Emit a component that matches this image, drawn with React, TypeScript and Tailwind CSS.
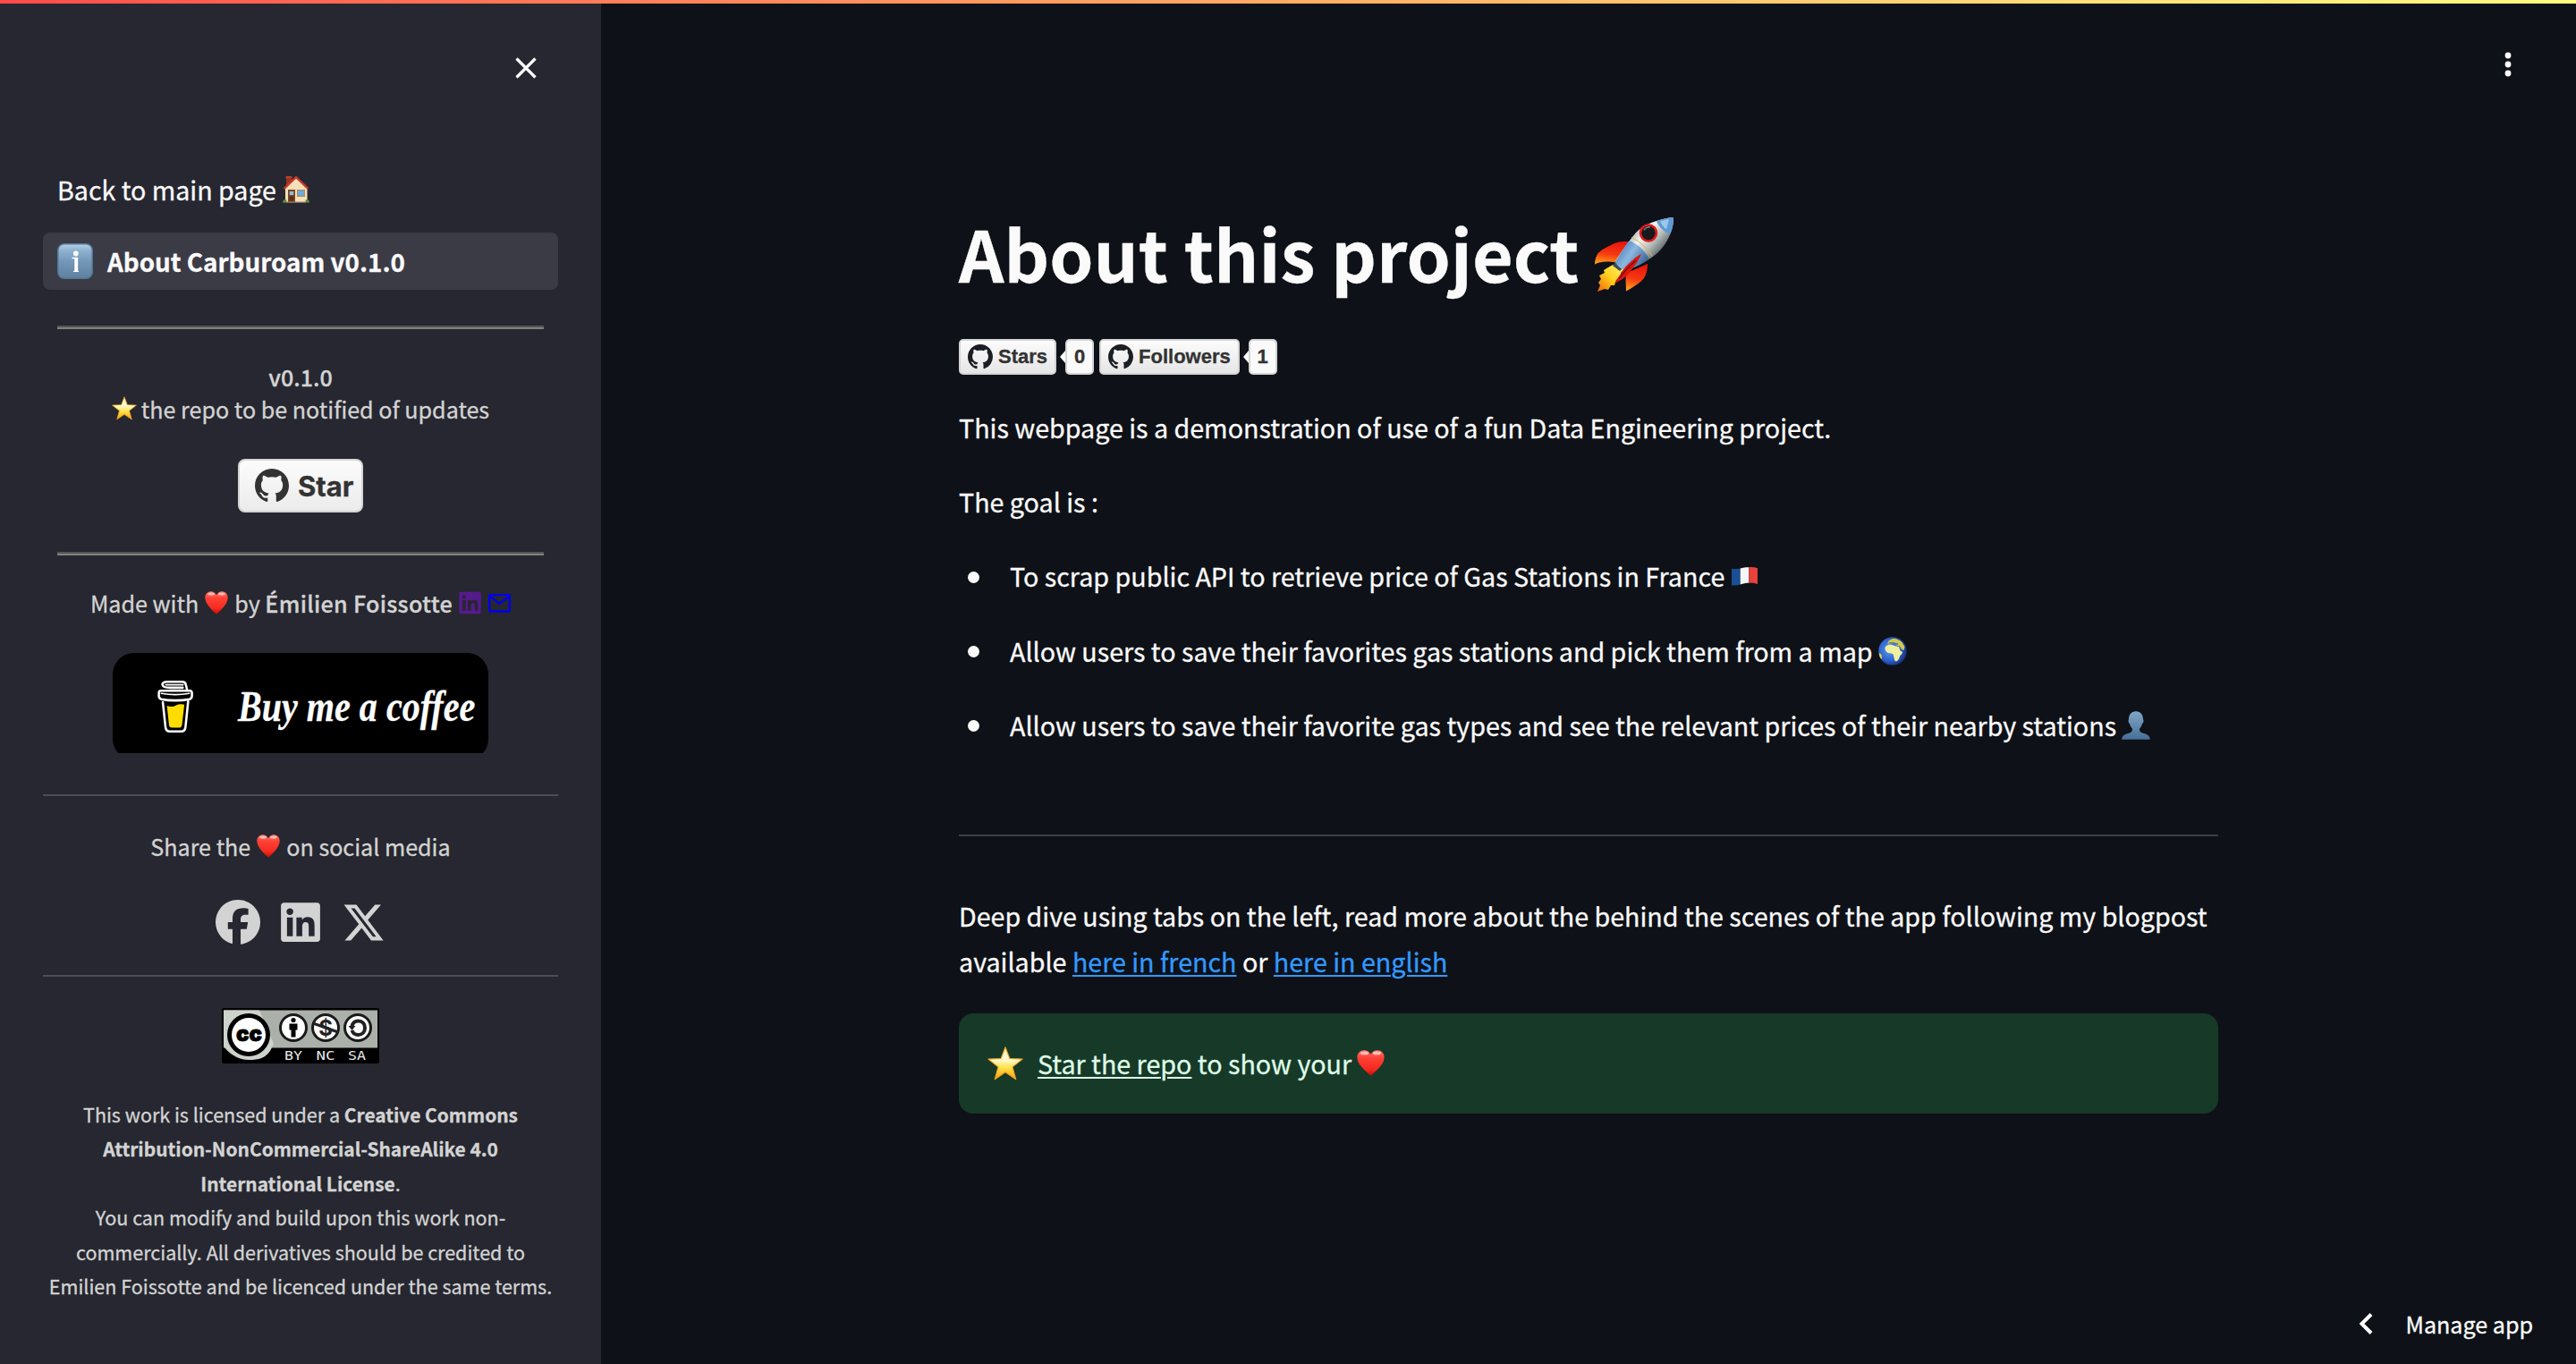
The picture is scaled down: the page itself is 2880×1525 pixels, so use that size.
import type { ReactNode } from 'react';
import { FaFacebook, FaLinkedin, FaXTwitter } from 'react-icons/fa6';

type IconProps = { className?: string };

function GithubMark({ className = '' }: IconProps) {
  return (
    <svg viewBox="0 0 16 16" fill="currentColor" className={className} aria-label="GitHub">
      <path d="M8 0C3.58 0 0 3.58 0 8c0 3.54 2.29 6.53 5.47 7.59.4.07.55-.17.55-.38 0-.19-.01-.82-.01-1.49-2.01.37-2.53-.49-2.69-.94-.09-.23-.48-.94-.82-1.13-.28-.15-.68-.52-.01-.53.63-.01 1.08.58 1.23.82.72 1.21 1.87.87 2.33.66.07-.52.28-.87.51-1.07-1.78-.2-3.64-.89-3.64-3.95 0-.87.31-1.59.82-2.15-.08-.2-.36-1.02.08-2.12 0 0 .67-.21 2.2.82.64-.18 1.32-.27 2-.27.68 0 1.36.09 2 .27 1.53-1.04 2.2-.82 2.2-.82.44 1.1.16 1.92.08 2.12.51.56.82 1.27.82 2.15 0 3.07-1.87 3.75-3.65 3.95.29.25.54.73.54 1.48 0 1.07-.01 1.93-.01 2.2 0 .21.15.46.55.38A8.013 8.013 0 0016 8c0-4.42-3.58-8-8-8z" />
    </svg>
  );
}

function Heart({ className = '' }: IconProps) {
  return (
    <svg viewBox="0 0 26 26" preserveAspectRatio="none" className={`inline-block ${className}`} aria-label="heart">
      <defs>
        <linearGradient id="heartFill" x1="0" y1="0" x2="0" y2="1">
          <stop offset="0" stopColor="#ff7a70" />
          <stop offset="0.3" stopColor="#ff4135" />
          <stop offset="0.75" stopColor="#f5291f" />
          <stop offset="1" stopColor="#c40d08" />
        </linearGradient>
      </defs>
      <path
        d="M13 4.2C11.5 1.4 9.2.2 6.900.2 3 .2.3 3.200.3 7.300c0 3.900 2.200 7.400 5 10.600 2.200 2.600 5.200 5.400 7.700 7.900 2.500-2.500 5.500-5.300 7.700-7.900 2.800-3.200 5-6.700 5-10.600 0-4.100-2.700-7.100-6.600-7.100-2.300 0-4.600 1.200-6.100 4z"
        fill="url(#heartFill)"
      />
      <ellipse cx="7.200" cy="3.100" rx="3.800" ry="1.700" fill="#ffd9d4" opacity="0.75" />
      <ellipse cx="18.800" cy="3.100" rx="3.800" ry="1.700" fill="#ffd9d4" opacity="0.75" />
    </svg>
  );
}

function Star({ className = '' }: IconProps) {
  return (
    <svg viewBox="0 0 40 38" className={`inline-block ${className}`} aria-label="star">
      <defs>
        <linearGradient id="starFill" x1="0" y1="0" x2="0" y2="1">
          <stop offset="0" stopColor="#fff3b8" />
          <stop offset="0.4" stopColor="#fff9cf" />
          <stop offset="0.62" stopColor="#ffe44f" />
          <stop offset="1" stopColor="#f7a30c" />
        </linearGradient>
      </defs>
      <path
        d="M20 .8l4.900 12.700 14.300.6-11.200 8.800 3.800 13.800-11.800-7.900-11.800 7.900 3.800-13.800L.8 14.100l14.300-.6z"
        fill="url(#starFill)"
        stroke="#e8a020"
        strokeWidth="1.100"
        strokeLinejoin="round"
      />
    </svg>
  );
}

function House({ className = '' }: IconProps) {
  return (
    <svg viewBox="0 0 30 30" className={`inline-block ${className}`} aria-label="home">
      <rect x="4" y="0.500" width="6" height="10" fill="#9a3324" />
      <rect x="3.500" y="0" width="7" height="2.200" fill="#b5412f" />
      <path d="M3 29V13L15 2.500 27.500 13V29z" fill="#f6dfb6" />
      <path d="M1.500 14.200L15 1l13.500 13.200" fill="none" stroke="#c8392b" strokeWidth="2.400" />
      <rect x="6" y="15" width="8" height="14" fill="#7d4424" />
      <rect x="7.800" y="17" width="4.400" height="4" fill="#7fc1f0" />
      <rect x="7.500" y="22.500" width="5" height="5" fill="#5e2e16" />
      <rect x="16" y="15" width="9" height="8" fill="#a98a68" />
      <rect x="17.200" y="16.200" width="6.600" height="5.600" fill="#69aee6" />
      <path d="M0 29.500c0-3 3-4.500 4.500-2.500v2.500zM25.500 29.500V27c1.500-2 4.500-.5 4.500 2.500z" fill="#5f8f3a" />
      <rect x="4" y="28.500" width="22" height="1.200" fill="#8f8373" />
    </svg>
  );
}

function Info({ className = '' }: IconProps) {
  return (
    <svg viewBox="0 0 40 40" className={className} aria-label="information">
      <defs>
        <linearGradient id="infoFill" x1="0" y1="0" x2="0" y2="1">
          <stop offset="0" stopColor="#b9d2e6" />
          <stop offset="0.18" stopColor="#8fb2d0" />
          <stop offset="0.5" stopColor="#7498b9" />
          <stop offset="1" stopColor="#5f809f" />
        </linearGradient>
      </defs>
      <rect x="0.800" y="0.800" width="38.400" height="38.400" rx="7" fill="url(#infoFill)" stroke="#537795" strokeWidth="1.400" />
      <circle cx="20.800" cy="11.500" r="2.900" fill="#fff" />
      <path d="M16.500 16.500h6v14.200M18 31.300h6" fill="none" stroke="#fff" strokeWidth="1.300" />
      <path d="M19.300 17h3.400v14.500h-3.400z" fill="#fff" />
    </svg>
  );
}

function Rocket({ className = '' }: IconProps) {
  return (
    <svg viewBox="0 0 88 84" className={className} aria-label="rocket">
      <defs>
        <linearGradient id="hull" x1="0.200" y1="0.250" x2="0.750" y2="0.700">
          <stop offset="0" stopColor="#8d9698" />
          <stop offset="0.400" stopColor="#f3f5f2" />
          <stop offset="0.700" stopColor="#b4bbb9" />
          <stop offset="1" stopColor="#5d666b" />
        </linearGradient>
        <linearGradient id="blueHull" x1="0" y1="0.200" x2="1" y2="0.800">
          <stop offset="0" stopColor="#3f78b3" />
          <stop offset="0.450" stopColor="#8db8e2" />
          <stop offset="1" stopColor="#28507f" />
        </linearGradient>
        <linearGradient id="fin" x1="0.500" y1="0" x2="0.300" y2="1">
          <stop offset="0" stopColor="#e8160c" />
          <stop offset="0.550" stopColor="#f63a12" />
          <stop offset="1" stopColor="#ffa21a" />
        </linearGradient>
        <linearGradient id="flame" x1="1" y1="0" x2="0" y2="1">
          <stop offset="0" stopColor="#fff27a" />
          <stop offset="0.500" stopColor="#ffd21c" />
          <stop offset="1" stopColor="#f2660a" />
        </linearGradient>
      </defs>
      <path
        d="M20 54L10 60l1 3-6 3 2 4-3 4 2 3-3 7 8-3 4 1 3-5 4 0 2-6 5-3 0-5 5-5z"
        fill="url(#flame)"
      />
      <path d="M38 28c-8 0-12 0-18 3C12 35 6 38 3 42 1 46 0 49 0 53.500c7-3.500 14-3.500 24-2z" fill="url(#fin)" />
      <path d="M59 53c0 6-1 11-4 16-5 6-12 10-20 14.500 0-7-1-13 0-20z" fill="url(#fin)" />
      <path d="M23 50l9 7-4 4-8-6z" fill="#3c4a55" />
      <path d="M86 1C72 3 56 8 46 18 36 30 28 42 23 50c3 6 7 9 13 10 12-4 26-12 35-20C82 29 88 14 88 3c0-1.500-.6-2-2-2z" fill="url(#hull)" />
      <path d="M38.500 27C32 36 26.500 45 23 51c3 5.500 7 8.500 13 9 10-3.500 18.500-8 25-12.500C55 37 48 31 38.500 27z" fill="url(#blueHull)" />
      <path d="M86 1c-6 .8-12 2.300-17 4.400C73 14 79 18 84 20c3-6 4-12 4-17 0-1.500-.6-2-2-2z" fill="#5f9bd3" />
      <path d="M83 3c-4 .7-7 1.500-10 2.600 2 4 4 6.500 7 8.900" fill="#b9daf4" opacity="0.700" />
      <path d="M41 23.500c10 4.500 17 11.500 23.500 21" fill="none" stroke="#d8b44a" strokeWidth="1" />
      <circle cx="60" cy="18.500" r="9" fill="#17191c" stroke="#e1191b" strokeWidth="2.600" />
      <path d="M55 15.500c1.500-3 4-4 7-3.500" stroke="#73797e" strokeWidth="1.500" fill="none" />
      <path d="M52 42c-3 1-16 11-21 19-4 6-7 10-9 14 8-4 14-8 18-14 5-6 9-12 12-19z" fill="#dc160e" />
      <path d="M46 49c-7 6-15 15-19 21" stroke="#6b0b08" strokeWidth="1.200" fill="none" />
    </svg>
  );
}

function Flag({ className = '' }: IconProps) {
  return (
    <svg viewBox="0 0 29 21" className={`inline-block ${className}`} aria-label="France">
      <path d="M0 1.800c3.500.8 6.500.4 9.700-.3v18C6.500 20.400 3.500 20.900 0 20.400z" fill="#1a4f96" />
      <path d="M9.700 1.500C13 .6 16 .1 19.300.2v17.600c-3.300 0-6.300.6-9.600 1.700z" fill="#f6f6f6" />
      <path d="M19.300.2c3.400-.3 6.700.1 9.700 1v17.900c-3-1.100-6.300-1.500-9.700-1.300z" fill="#e8423c" />
    </svg>
  );
}

function Globe({ className = '' }: IconProps) {
  return (
    <svg viewBox="0 0 32 32" className={`inline-block ${className}`} aria-label="globe">
      <defs>
        <radialGradient id="sea" cx="0.400" cy="0.450" r="0.620">
          <stop offset="0" stopColor="#5b9cf5" />
          <stop offset="0.650" stopColor="#2a5fc9" />
          <stop offset="1" stopColor="#152a6b" />
        </radialGradient>
      </defs>
      <circle cx="16" cy="16" r="15.800" fill="url(#sea)" />
      <path d="M8 11c2-2 4-2.500 6.500-2.200l5 1.700 3.500.5 1.500 4.500 2.500 1.500c0 2-2 3-3 4.500-.5 2-1 4-3 5.500-1.500 1-2.500 0-3-1.500-.6-2-.6-4-1.500-6-1.500-1.500-3.500-1-5.500-1.500C8.500 16.500 6.500 14 8 11z" fill="#f0f0a0" />
      <path d="M10 7.500L12 4l4-2c4-.5 8 1.500 10.500 4l3 5-1 4-2.500-1-2-3.500-4-1-2.500-2-3 .5z" fill="#cfc94f" />
      <path d="M1 18l2.500 2 .5 4-1 .5C1.500 22.500.8 20.500 1 18z" fill="#e8d44a" />
      <path d="M12 6.500c2 1 5-.5 7 1.300l3 .2" stroke="#2b62c4" strokeWidth="1.300" fill="none" />
    </svg>
  );
}

function Person({ className = '' }: IconProps) {
  return (
    <svg viewBox="0 0 32 32" className={`inline-block ${className}`} aria-label="user">
      <defs>
        <linearGradient id="bust" x1="0" y1="0" x2="0" y2="1">
          <stop offset="0" stopColor="#7fa6c6" />
          <stop offset="1" stopColor="#476f97" />
        </linearGradient>
      </defs>
      <path
        d="M16 .2c-5 0-8 3.600-8 8.600 0 .8-.6 1.200-.5 2.400.1 1.600.8 2.400 1.500 2.800.6 3 1.800 4.600 3 5.800 0 2-.4 3.400-2 4.200C6.500 25.300.4 25.800.2 31.800h31.600c-.2-6-6.300-6.500-9.800-7.800-1.600-.8-2-2.200-2-4.200 1.200-1.200 2.400-2.800 3-5.800.7-.4 1.400-1.200 1.500-2.800.1-1.200-.5-1.600-.5-2.400 0-5-3-8.600-8-8.600z"
        fill="url(#bust)"
      />
    </svg>
  );
}

function CoffeeCup({ className = '' }: IconProps) {
  return (
    <svg viewBox="0 0 40 60" className={className} fill="none" stroke="#fff" strokeWidth="2.600" strokeLinejoin="round" strokeLinecap="round">
      <path d="M10.500 28.500c4 1.600 7 1.200 10.500-.6 3-1.500 6-1.700 9.300-.7L27.600 50c-.2 2.200-1.400 3.400-3.400 3.400h-8c-2 0-3.200-1-3.400-3.200z" fill="#ffdd00" stroke="none" />
      <path d="M5.800 24.500l3 28c.3 3.400 2 5.300 5 5.300h12.800c3 0 4.700-1.900 5-5.300l3-29" />
      <path d="M3.500 11.500h33c1.500 0 2.400 1 2.400 2.600v3.200c0 2-.9 3.200-2.800 3.700-9 2-23 2-32 0-1.900-.5-2.800-1.700-2.800-3.700V14c0-1.600.7-2.500 2.200-2.500z" />
      <path d="M4 14.500c9 1.600 23 1.600 32 0" strokeWidth="1.600" />
      <path d="M33.500 11L32 4.500C31.500 2 30 1.300 28 1.300H11C7 1.300 5 2.800 5.400 4.700 5.800 6.900 9 8 14 8h14.500" />
      <path d="M9 4.700h20" strokeWidth="1.600" />
    </svg>
  );
}

function Mail({ className = '' }: IconProps) {
  return (
    <svg viewBox="0 0 25 21" className={`inline-block ${className}`} fill="none" stroke="#0000ee" strokeWidth="2.300">
      <rect x="1.200" y="1.200" width="22.600" height="18.300" rx="1" />
      <path d="M1.500 2.500l11 8.300 11-8.300" />
    </svg>
  );
}

function CcBadge({ className = '' }: IconProps) {
  return (
    <svg viewBox="0 0 176 62" className={className} fontFamily="Inter, sans-serif" aria-label="CC BY-NC-SA">
      <rect width="176" height="62" rx="2" fill="#000" />
      <rect x="2" y="2.500" width="172" height="42" fill="#abb1aa" />
      <path d="M2 2.500h40L58 40l-4 8c-6 8-12 10-24 10S6 50 2 42z" fill="#ced2cd" />
      <circle cx="30" cy="30" r="24" fill="#000" />
      <circle cx="30" cy="30" r="19" fill="#fff" />
      <text x="30.500" y="36.500" fontSize="24" fontWeight="900" textAnchor="middle" textLength="29" lengthAdjust="spacingAndGlyphs" stroke="#000" strokeWidth="0.800">cc</text>
      {[80, 116, 152].map((cx) => (
        <circle key={cx} cx={cx} cy="22" r="14.500" fill="#fff" stroke="#1a1a1a" strokeWidth="3" />
      ))}
      <circle cx="80" cy="13.500" r="2.600" fill="#000" />
      <path d="M75.500 17.500h9v7h-2v8h-5v-8h-2z" fill="#000" />
      <text x="116" y="31" fontSize="24" fontWeight="700" textAnchor="middle" fill="#222">$</text>
      <path d="M102 17l28 10" stroke="#222" strokeWidth="3" />
      <path d="M145.500 20.500c.8-4 3.500-6 7-6 4.500 0 7.500 3.300 7.500 7.700s-3 7.800-7.500 7.800c-3.500 0-6-1.800-7-5" fill="none" stroke="#222" strokeWidth="4" />
      <path d="M141.500 20h8l-4 5z" fill="#222" />
      <g fill="#e8e8e8" fontSize="14" fontWeight="500" textAnchor="middle" fontFamily="'DejaVu Sans Mono', monospace">
        <text x="80" y="58" textLength="20" lengthAdjust="spacingAndGlyphs">BY</text>
        <text x="116" y="58" textLength="21" lengthAdjust="spacingAndGlyphs">NC</text>
        <text x="151" y="58" textLength="20" lengthAdjust="spacingAndGlyphs">SA</text>
      </g>
    </svg>
  );
}

function GithubBadge({ label, count }: { label: string; count: string }) {
  return (
    <div className="flex h-10 items-stretch font-['Liberation_Sans',sans-serif] text-[22px] font-bold text-[#333]">
      <div className="flex items-center gap-1.5 rounded-[5px] border-2 border-[#d4d4d4] bg-linear-to-b from-[#fcfcfc] to-[#e6e6e6] pr-2 pl-2">
        <GithubMark className="size-7 text-[#1b1f23]" />
        <span className="leading-none">{label}</span>
      </div>
      <svg viewBox="0 0 6 14" className="ml-1 h-3.5 w-1.5 self-center">
        <path d="M6 0L0 7l6 7z" fill="#fafafa" />
      </svg>
      <div className="flex w-8 items-center justify-center rounded-[5px] border-2 border-[#d4d4d4] bg-[#fafafa] leading-none">
        {count}
      </div>
    </div>
  );
}

function Bullet({ children }: { children: ReactNode }) {
  return (
    <li className="flex items-center">
      <span className="mt-0.5 mr-[34px] ml-2.5 size-[13px] rounded-full bg-[#fafafa]" />
      <span>{children}</span>
    </li>
  );
}

function Sidebar() {
  return (
    <aside className="flex w-[672px] shrink-0 flex-col bg-[#262730] px-12 text-[25.1px] leading-9 text-[#d3d3d3]">
      <div className="flex h-[180px] items-start justify-end pt-16 pr-6">
        <svg viewBox="0 0 24 24" className="size-6" stroke="#fafafa" strokeWidth="3.200">
          <path d="M1.500 1.500l21 21M22.500 1.500l-21 21" />
        </svg>
      </div>

      <nav className="flex flex-col gap-4 text-[#fafafa]">
        <a className="flex h-16 items-center px-4 text-[28.6px]">
          Back to main page
          <House className="ml-[7px] size-[30px]" />
        </a>
        <a className="flex h-16 items-center gap-4 rounded-lg bg-[#3b3b46] px-4 text-[27.8px] font-bold">
          <Info className="size-10" />
          About Carburoam v0.1.0
        </a>
      </nav>

      <hr className="mx-4 mt-10 h-1 border-t-2 border-b-2 border-t-[#555] border-b-[#808080]" />

      <div className="mt-[35px] text-center">
        <p className="font-medium">v0.1.0</p>
        <p>
          <Star className="mr-[5px] h-[27px] w-7 align-[-2px]" />
          the repo to be notified of updates
        </p>
      </div>

      <div className="mt-[38px] flex h-[60px] w-[140px] items-center gap-2.5 self-center rounded-lg border-2 border-[#d4d4d4] bg-linear-to-b from-[#fcfcfc] to-[#ebebeb] pl-[17px] font-['Inter',sans-serif] text-[31px] font-bold text-[#333]">
        <GithubMark className="size-[38px] shrink-0" />
        <span className="leading-none">Star</span>
      </div>

      <hr className="mx-4 mt-11 h-1 border-t-2 border-b-2 border-t-[#555] border-b-[#808080]" />

      <p className="mt-[35px] flex h-9 items-center justify-center whitespace-pre">
        Made with
        <Heart className="mx-[7px] h-[26px] w-[26px]" />
        by <span className="font-medium tracking-[0.3px]">Émilien Foissotte</span>
        <FaLinkedin className="mr-2 ml-[7px] h-7 w-[25px] text-[#551a8b]" />
        <Mail className="h-[21px] w-[25px]" />
      </p>

      <div className="mt-[38px] h-28 w-[420px] self-center overflow-hidden">
        <div className="flex h-[120px] items-center rounded-3xl bg-black pl-[50px] text-white">
          <CoffeeCup className="h-[59px] w-10 shrink-0" />
          <span className="ml-[50px] origin-left scale-x-[0.835] font-['Liberation_Serif',serif] text-[48px] leading-none font-bold whitespace-nowrap italic">
            Buy me a coffee
          </span>
        </div>
      </div>

      <hr className="mt-[46px] h-0.5 border-0 bg-[#4c4d56]" />

      <p className="mt-[38px] flex h-9 items-center justify-center">
        Share the
        <Heart className="mx-[7px] size-[26px]" />
        on social media
      </p>

      <div className="mt-[42px] flex h-[50px] items-center justify-center">
        <FaFacebook className="size-[50px]" />
        <FaLinkedin className="ml-[23px] h-[50px] w-11" />
        <FaXTwitter className="ml-6 size-[49px]" />
      </div>

      <hr className="mt-[34px] h-0.5 border-0 bg-[#4c4d56]" />

      <CcBadge className="mt-[35px] h-[62px] w-44 self-center" />

      <p className="-mx-2 mt-[38px] text-center text-[21.5px] leading-[38.4px]">
        This work is licensed under a <b className="text-[20.9px]">Creative Commons</b>
        <br />
        <b className="text-[20.9px]">Attribution-NonCommercial-ShareAlike 4.0</b>
        <br />
        <b className="text-[20.9px]">International License</b>.<br />
        You can modify and build upon this work non-
        <br />
        commercially. All derivatives should be credited to
        <br />
        Emilien Foissotte and be licenced under the same terms.
      </p>
    </aside>
  );
}

export default function App() {
  return (
    <div className="relative flex h-[1525px] w-[2880px] overflow-hidden bg-[#0e1117] font-['Noto_Sans_CJK_SC',sans-serif] text-[#fafafa] [-webkit-text-stroke:0.3px]">
      <div className="absolute inset-x-0 top-0 h-1 bg-linear-to-r from-[#ff4b4b] to-[#fffd80]" />
      <Sidebar />

      <main className="ml-[400px] flex w-[1408px] flex-col text-[28.67px] leading-[51.2px]">
        <h1 className="mt-[229px] flex h-[106px] items-center text-[78.8px] leading-[106px] font-bold">
          About this project
          <Rocket className="ml-[18px] h-[84px] w-[88px] translate-y-0.5" />
        </h1>

        <div className="mt-11 flex gap-1.5">
          <GithubBadge label="Stars" count="0" />
          <GithubBadge label="Followers" count="1" />
        </div>

        <div className="mt-[33px] flex flex-col gap-8">
          <p>This webpage is a demonstration of use of a fun Data Engineering project.</p>
          <p>The goal is :</p>
          <ul className="flex flex-col gap-8">
            <Bullet>
              To scrap public API to retrieve price of Gas Stations in France
              <Flag className="ml-2 h-[21px] w-[29px] align-[1px]" />
            </Bullet>
            <Bullet>
              Allow users to save their favorites gas stations and pick them from a map
              <Globe className="ml-1.5 size-8 align-[-4px]" />
            </Bullet>
            <Bullet>
              Allow users to save their favorite gas types and see the relevant prices of their nearby stations
              <Person className="ml-1.5 size-8 align-[-4px]" />
            </Bullet>
          </ul>
        </div>

        <hr className="mt-[97px] h-0.5 border-0 bg-[#3d3f45]" />

        <p className="mt-[63px]">
          <span className="text-[28.64px]">
            Deep dive using tabs on the left, read more about the behind the scenes of the app following my blogpost
          </span>
          <br />
          available{' '}
          <a className="text-[#3399ff] underline decoration-2 underline-offset-[3px]">here in french</a> or{' '}
          <a className="text-[#3399ff] underline decoration-2 underline-offset-[3px]">here in english</a>
        </p>

        <div className="mt-[33px] flex h-28 items-center rounded-2xl bg-[#173928] pl-8 text-[#dffde9]">
          <Star className="mr-4 h-[38px] w-10" />
          <p className="-mt-0.5 flex items-center whitespace-pre">
            <a className="underline decoration-2 underline-offset-[3px]">Star the repo</a> to show your
            <Heart className="ml-1.5 h-[29px] w-[31px]" />
          </p>
        </div>
      </main>

      <svg viewBox="0 0 8 28" className="absolute top-[58px] left-[2800px] h-7 w-2" fill="#fafafa">
        <circle cx="4" cy="4" r="3.400" />
        <circle cx="4" cy="14" r="3.400" />
        <circle cx="4" cy="24" r="3.400" />
      </svg>

      <button className="absolute right-12 bottom-[27px] flex items-center text-[25.1px] leading-9">
        <svg viewBox="0 0 16 26" className="mr-[37px] h-[26px] w-4" fill="none" stroke="#fff" strokeWidth="4">
          <path d="M14 2.500L3.500 13 14 23.500" />
        </svg>
        Manage app
      </button>
    </div>
  );
}
